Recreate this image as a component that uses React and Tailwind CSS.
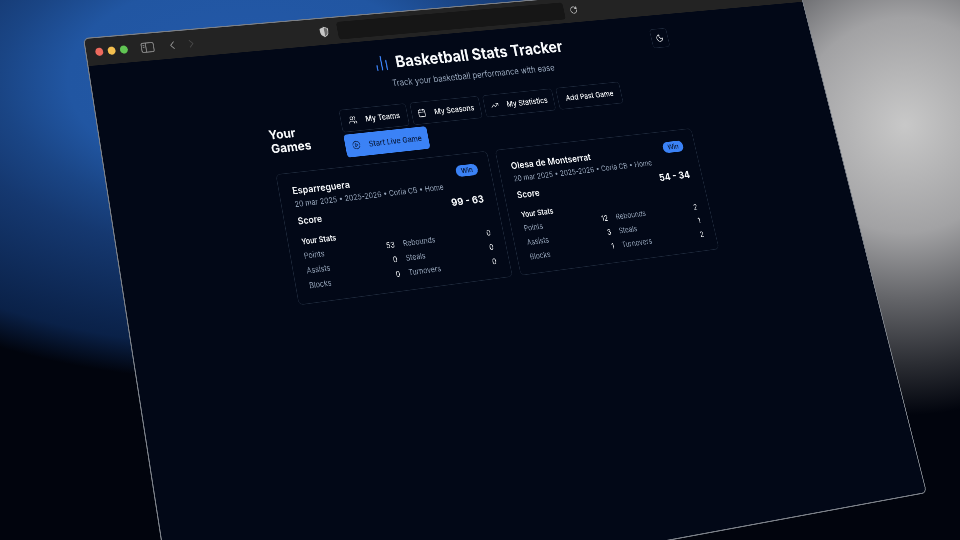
import { ChartNoAxesColumn, Calendar, ChevronLeft, ChevronRight, Moon, CirclePlay, RotateCw, TrendingUp, Users } from 'lucide-react';

const games = [
  {
    opponent: 'Esparreguera',
    score: '99 - 63',
    stats: [
      ['Points', 53, 'Rebounds', 0],
      ['Assists', 0, 'Steals', 0],
      ['Blocks', 0, 'Turnovers', 0],
    ],
  },
  {
    opponent: 'Olesa de Montserrat',
    score: '54 - 34',
    stats: [
      ['Points', 12, 'Rebounds', 2],
      ['Assists', 3, 'Steals', 1],
      ['Blocks', 1, 'Turnovers', 2],
    ],
  },
];

function GameCard({ game }) {
  return (
    <div className="h-[222px] rounded-lg border border-[#1e293b] bg-[#020817] px-6 pt-4">
      <div className="flex items-start justify-between">
        <h3 className="text-[16.5px] leading-7 font-semibold text-[#f8fafc]">{game.opponent}</h3>
        <span className="mt-[3px] rounded-full bg-[#3b82f6] px-2.5 py-0.5 text-xs leading-4 font-semibold text-[#0b1f45]">Win</span>
      </div>
      <p className="text-[13px] leading-[18px] text-[#94a3b8]">20 mar 2025 • 2025-2026 • Coria CB • Home</p>
      <div className="mt-[6px] flex items-center justify-between leading-7">
        <span className="text-base font-semibold text-[#f8fafc]">Score</span>
        <span className="text-lg font-bold text-[#f8fafc]">{game.score}</span>
      </div>
      <p className="mt-[11px] text-[13px] leading-5 font-semibold text-[#f8fafc]">Your Stats</p>
      <div className="mt-[2px] grid grid-cols-2 gap-x-4 text-[13px] leading-[25px]">
        {game.stats.map((row) => (
          <div key={row[0]} className="contents">
            <div className="flex justify-between">
              <span className="text-[#94a3b8]">{row[0]}</span>
              <span className="text-[#f8fafc]">{row[1]}</span>
            </div>
            <div className="flex justify-between">
              <span className="text-[#94a3b8]">{row[2]}</span>
              <span className="text-[#f8fafc]">{row[3]}</span>
            </div>
          </div>
        ))}
      </div>
    </div>
  );
}

function NavButton({ icon: Icon, label, className }) {
  return (
    <button type="button" className={`flex h-10 items-center justify-center gap-4 rounded-md border border-[#1e293b] bg-[#020817] text-[13.5px] font-medium text-[#f8fafc] ${className}`}>
      {Icon && <Icon className="h-4 w-4" strokeWidth={1.75} />}
      {label}
    </button>
  );
}

export default function App() {
  return (
    <div className="relative h-[540px] w-[960px] overflow-hidden bg-[#01040d] font-['Inter',sans-serif]">
      {/* Backdrop */}
      <div className="absolute inset-0 bg-[radial-gradient(ellipse_290px_290px_at_905px_125px,#c8c8c8_0%,#a2a2a4_37%,#646569_60%,#2a2c32_83%,#01040d00_100%),radial-gradient(ellipse_520px_290px_at_250px_80px,#2459aa_0%,#2156a2_35%,#1a4585_48%,#153870_60%,#0a2148_92%,#01040d00_104%)]" />

      {/* Tilted browser window */}
      <div className="absolute top-0 left-0 flex h-[960px] w-[1440px] origin-top-left flex-col overflow-hidden rounded-[10px] border-2 border-[#7b8088] bg-[#020817] blur-[0.5px] [transform:matrix3d(0.56858,-0.04446,0,0.00009127,0.08248,0.57052,0,-0.0000763,0,0,1,0,83,38,0,1)]">
        <div className="flex h-[47px] shrink-0 items-center bg-[#232323] pl-4 text-[#9a9a9a]">
          <div className="flex gap-2">
            <span className="h-3.5 w-3.5 rounded-full bg-[#ed6a5e]" />
            <span className="h-3.5 w-3.5 rounded-full bg-[#f4bf4f]" />
            <span className="h-3.5 w-3.5 rounded-full bg-[#61c554]" />
          </div>
          <svg className="ml-6 h-6 w-6" viewBox="0 0 24 24" fill="none" stroke="currentColor" strokeWidth="1.5">
            <rect x="1" y="4" width="22" height="16" rx="3" />
            <path d="M9 4v16M3.5 8h3M3.5 11h3" />
          </svg>
          <ChevronLeft className="ml-[21px] h-6 w-6" strokeWidth={1.5} />
          <ChevronRight className="ml-[11px] h-6 w-6 text-[#4a4a4a]" strokeWidth={1.5} />
          <svg className="ml-[228px] h-5 w-5" viewBox="0 0 20 20">
            <path d="M10 1.5 17.5 4v6c0 4.5-3.2 7.2-7.5 8.5z" fill="#6a6a6a" stroke="#c8c8c8" strokeWidth="1.5" />
            <path d="M10 1.5 2.5 4v6c0 4.5 3.2 7.2 7.5 8.5z" fill="#c8c8c8" />
          </svg>
          <div className="ml-4 h-8 w-[456px] rounded-md bg-[#161616]" />
          <RotateCw className="ml-3 h-4 w-4 text-[#c4c4c4]" />
        </div>

        <div className="relative mx-auto w-[896px] pt-6 pr-[36px] pl-8">
          <button type="button" className="absolute top-[26px] right-[40px] flex h-9 w-9 items-center justify-center rounded-md border border-[#1e293b] text-[#f8fafc]">
            <Moon className="h-4 w-4" />
          </button>
          <div className="flex items-center justify-center gap-3 pr-[8px]">
            <ChartNoAxesColumn className="h-8 w-8 text-[#3b82f6]" strokeWidth={1.75} />
            <h1 className="text-[28.5px] leading-9 font-bold text-[#f8fafc]">Basketball Stats Tracker</h1>
          </div>
          <p className="mt-2 pr-[4px] text-center text-[15.3px] leading-6 text-[#94a3b8]">Track your basketball performance with ease</p>

          <div className="mt-[25px] flex items-start gap-[14px]">
            <h2 className="w-[124px] pt-[19px] text-[22px] leading-6 font-bold text-[#f8fafc]">Your Games</h2>
            <div className="flex w-[600px] flex-wrap gap-x-2 gap-y-1">
              <NavButton icon={Users} label="My Teams" className="w-[129px]" />
              <NavButton icon={Calendar} label="My Seasons" className="w-[136px]" />
              <NavButton icon={TrendingUp} label="My Statistics" className="w-[141px]" />
              <NavButton label="Add Past Game" className="w-[132px]" />
              <button type="button" className="flex h-10 w-[160px] items-center justify-center gap-4 rounded-md bg-[#3b82f6] text-[13.5px] font-medium text-[#0b1f45]">
                <CirclePlay className="h-4 w-4" strokeWidth={1.75} />
                Start Live Game
              </button>
            </div>
          </div>

          <div className="mt-[15px] grid grid-cols-2 gap-4">
            {games.map((game) => (
              <GameCard key={game.opponent} game={game} />
            ))}
          </div>
        </div>
      </div>
    </div>
  );
}
